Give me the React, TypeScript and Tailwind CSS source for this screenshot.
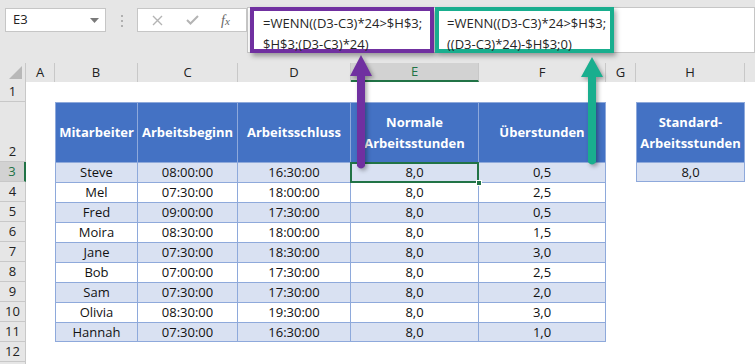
import React from "react";

const rows = [
  ["Steve", "08:00:00", "16:30:00", "8,0", "0,5"],
  ["Mel", "07:30:00", "18:00:00", "8,0", "2,5"],
  ["Fred", "09:00:00", "17:30:00", "8,0", "0,5"],
  ["Moira", "08:30:00", "18:00:00", "8,0", "1,5"],
  ["Jane", "07:30:00", "18:30:00", "8,0", "3,0"],
  ["Bob", "07:00:00", "17:30:00", "8,0", "2,5"],
  ["Sam", "07:30:00", "17:30:00", "8,0", "2,0"],
  ["Olivia", "08:30:00", "19:30:00", "8,0", "3,0"],
  ["Hannah", "07:30:00", "16:30:00", "8,0", "1,0"],
];

const font = { fontFamily: '"Open Sans", "Noto Sans", sans-serif' };

function RowHead({ n, sel }: { n?: number; sel?: boolean }) {
  return (
    <div
      className={`flex items-end justify-center border-b border-r border-[#c8c8c8] pb-[1px] text-[13px] leading-[17px] ${
        sel ? "bg-[#d2d2d2] text-[#217346] border-r-2 border-r-[#217346]" : "bg-[#e6e6e6] text-[#222]"
      }`}
    >
      {n}
    </div>
  );
}

function Blank() {
  return <div className="bg-white" />;
}

export default function App() {
  return (
    <div className="relative w-[755px] h-[364px] overflow-hidden bg-white text-[#111]" style={font}>
      {/* Top formula bar */}
      <div className="flex h-[63px] bg-[#e6e6e6] pt-[7px]">
        <div className="ml-[5px] mt-[1px] flex h-[24px] w-[101px] items-center justify-between border border-[#c6c6c6] bg-white pl-[7px] pr-[6px] text-[13px] text-[#222]">
          <span>E3</span>
          <svg width="9" height="5" viewBox="0 0 9 5">
            <path d="M0 0 H9 L4.5 5 Z" fill="#7a7a7a" />
          </svg>
        </div>
        <div className="flex h-[26px] w-[31px] flex-col items-center justify-center gap-[3px] pt-[2px]">
          <span className="h-[2px] w-[2px] bg-[#b0b0b0]" />
          <span className="h-[2px] w-[2px] bg-[#b0b0b0]" />
          <span className="h-[2px] w-[2px] bg-[#b0b0b0]" />
        </div>
        <div className="mt-[1px] flex h-[24px] w-[110px] items-center border border-[#c6c6c6] bg-white">
          <svg className="ml-[14px]" width="11" height="11" viewBox="0 0 11 11">
            <path d="M1 1 L10 10 M10 1 L1 10" stroke="#b4b4b4" strokeWidth="1.4" />
          </svg>
          <svg className="ml-[23px]" width="13" height="10" viewBox="0 0 13 10">
            <path d="M1 5 L4.5 8.5 L12 1" stroke="#b4b4b4" strokeWidth="2" fill="none" />
          </svg>
          <span
            className="ml-[22px] text-[14px] italic text-[#666]"
            style={{ fontFamily: '"Liberation Serif", serif' }}
          >
            f<span className="text-[11px]">x</span>
          </span>
        </div>
        <div className="h-[46px] flex-1 border border-[#c6c6c6] bg-white" />
      </div>

      {/* Sheet grid */}
      <div className="grid grid-cols-[26px_29px_83px_100px_113px_128px_127px_30px_109px_10px] grid-rows-[19px_20px_60px_repeat(11,20px)] text-[13px]">
        {/* Column header row */}
        <div className="relative border-r border-[#c8c8c8] bg-[#e6e6e6]">
          <svg className="absolute bottom-[3px] right-[3px]" width="13" height="13" viewBox="0 0 13 13">
            <path d="M13 0 V13 H0 Z" fill="#b8b8b8" />
          </svg>
        </div>
        {["A", "B", "C", "D"].map((c) => (
          <div key={c} className="flex items-center justify-center border-r border-[#c8c8c8] bg-[#e6e6e6] text-[#222]">
            {c}
          </div>
        ))}
        <div className="flex items-center justify-center border-r border-b-2 border-[#c8c8c8] border-b-[#217346] bg-[#d2d2d2] text-[#217346]">
          E
        </div>
        {["F", "G", "H"].map((c) => (
          <div key={c} className="flex items-center justify-center border-r border-[#c8c8c8] bg-[#e6e6e6] text-[#222]">
            {c}
          </div>
        ))}
        <div className="bg-[#e6e6e6]" />

        {/* Row 1 */}
        <RowHead n={1} />
        {Array.from({ length: 9 }).map((_, i) => (
          <Blank key={i} />
        ))}

        {/* Row 2 header */}
        <RowHead n={2} />
        <Blank />
        {["Mitarbeiter", "Arbeitsbeginn", "Arbeitsschluss", "Normale Arbeitsstunden", "Überstunden"].map((h, i) => (
          <div
            key={h}
            className={`flex items-center justify-center border-r border-t border-[#8ea9db] bg-[#4472c4] px-1 text-center font-bold leading-[21px] text-white ${
              i === 0 ? "border-l" : ""
            }`}
          >
            {h === "Normale Arbeitsstunden" ? (
              <span>
                Normale
                <br />
                Arbeitsstunden
              </span>
            ) : (
              h
            )}
          </div>
        ))}
        <Blank />
        <div className="flex items-center justify-center border-l border-r border-t border-[#8ea9db] bg-[#4472c4] text-center font-bold leading-[21px] text-white">
          <span>
            Standard-
            <br />
            Arbeitsstunden
          </span>
        </div>
        <Blank />

        {/* Data rows */}
        {rows.map((r, ri) => {
          const fill = ri % 2 === 0 ? "bg-[#d9e1f2]" : "bg-white";
          const last = ri === rows.length - 1;
          return (
            <React.Fragment key={r[0]}>
              <RowHead n={ri + 3} sel={ri === 0} />
              <Blank />
              {r.map((v, ci) => (
                <div
                  key={ci}
                  className={`relative flex items-center justify-center border-r border-t border-[#8ea9db] ${fill} leading-[19px] text-[#111] ${
                    ci === 0 ? "border-l" : ""
                  } ${last ? "border-b" : ""} ${ri === 0 && ci === 3 ? "z-10" : ""}`}
                >
                  {v}
                  {ri === 0 && ci === 3 && (
                    <>
                      <div className="pointer-events-none absolute left-[-1px] top-[-1px] h-[21px] w-[129px] border-2 border-[#217346]" />
                      <div className="absolute bottom-[-4px] right-[-4px] h-[6px] w-[6px] border border-white bg-[#217346]" />
                    </>
                  )}
                </div>
              ))}
              <Blank />
              {ri === 0 ? (
                <div className="flex items-center justify-center border-b border-l border-r border-t border-[#8ea9db] bg-[#d9e1f2] leading-[19px]">
                  8,0
                </div>
              ) : (
                <Blank />
              )}
              <Blank />
            </React.Fragment>
          );
        })}

        {/* Row 12 */}
        <RowHead n={12} />
        {Array.from({ length: 9 }).map((_, i) => (
          <Blank key={"b12" + i} />
        ))}
        <RowHead />
        {Array.from({ length: 9 }).map((_, i) => (
          <Blank key={"b13" + i} />
        ))}
      </div>

      {/* Formula callouts */}
      <div className="absolute left-[250px] top-[7px] z-20 h-[46px] w-[184px] whitespace-nowrap border-[4px] border-[#7030a0] bg-white pl-[9px] pt-[2px] text-[13px] leading-[21px] text-[#262626] shadow-[2px_3px_5px_rgba(0,0,0,0.35)]">
        =WENN((D3-C3)*24&gt;$H$3;
        <br />
        $H$3;(D3-C3)*24)
      </div>
      <div className="absolute left-[435px] top-[7px] z-20 h-[46px] w-[179px] whitespace-nowrap border-[4px] border-[#19ae8e] bg-white pl-[8px] pt-[2px] text-[13px] leading-[21px] text-[#262626] shadow-[2px_3px_5px_rgba(0,0,0,0.35)]">
        =WENN((D3-C3)*24&gt;$H$3;
        <br />
        ((D3-C3)*24)-$H$3;0)
      </div>

      {/* Arrows */}
      <svg
        className="absolute left-0 top-0 z-30"
        width="755"
        height="364"
        style={{ filter: "drop-shadow(2px 2px 2px rgba(0,0,0,0.35))" }}
      >
        <path d="M361 55 L372 76 L365 76 L365 166 Q361 171 357 166 L357 76 L350 76 Z" fill="#7030a0" />
        <path d="M592 57 L603 77 L596 77 L596 162 Q592 167 588 162 L588 77 L581 77 Z" fill="#19ae8e" />
      </svg>
    </div>
  );
}
